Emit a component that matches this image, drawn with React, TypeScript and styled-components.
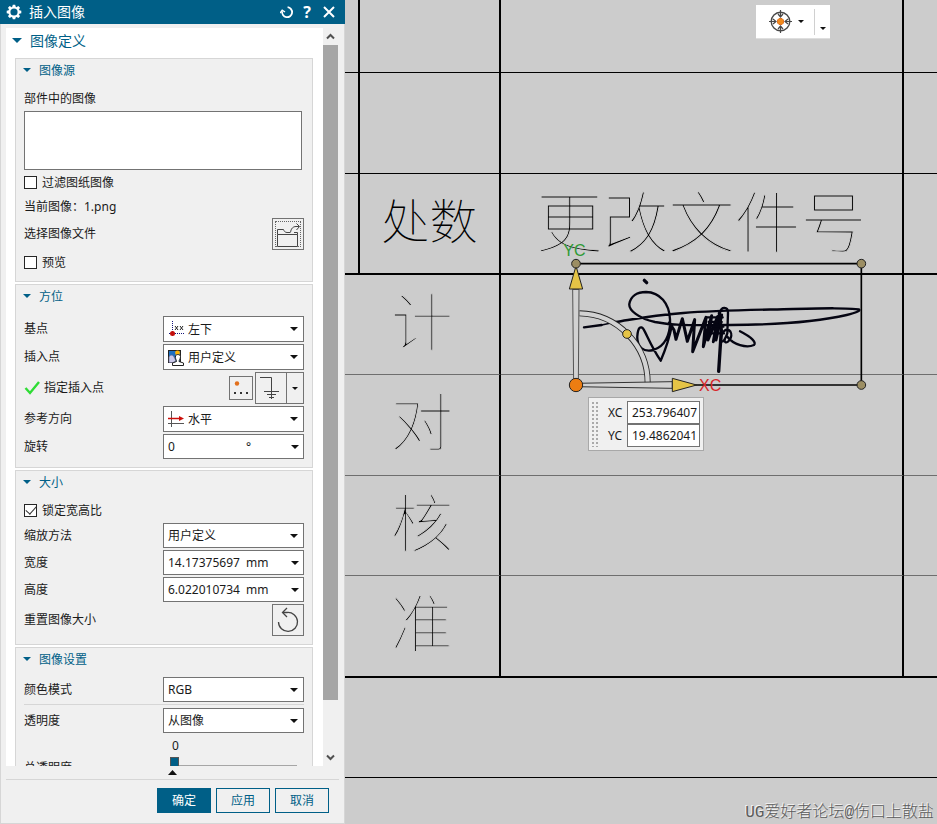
import React from 'react';
import styled, { createGlobalStyle, css } from 'styled-components';

const BLUE = '#005f87';
const LINE = '#d6d6d6';
const EDGE = '#737373';

const Global = createGlobalStyle`
  * { box-sizing: border-box; }
  body { margin: 0; background: #cccccc; }
  body, button, input, select {
    font-family: 'Noto Sans', 'Noto Sans CJK SC', sans-serif;
    font-size: 12px;
    color: #1a1a1a;
  }
  button { padding: 0; cursor: pointer; }
`;

const Screen = styled.div`
  display: flex;
  height: 100vh;
  overflow: hidden;
`;

/* ---------- dialog ---------- */

const Dialog = styled.aside`
  display: flex;
  flex-direction: column;
  flex: 0 0 345px;
  background: #f0f0f0;
`;

const TitleBar = styled.header`
  display: flex;
  align-items: center;
  height: 24px;
  padding: 0 6px;
  background: ${BLUE};
  color: #fff;
`;

const Title = styled.h1`
  flex: 1;
  margin: 0 0 0 7px;
  font-size: 14px;
  line-height: 20px;
  font-weight: 400;
`;

const TitleButton = styled.button`
  display: grid;
  place-items: center;
  width: 20px;
  height: 20px;
  border: 0;
  background: none;
  color: #fff;
  font-size: 16px;
  line-height: 20px;
  font-weight: 700;
  &:last-child {
    margin-left: 2px;
  }
`;

const DialogBody = styled.div`
  display: flex;
  flex: 1;
  flex-direction: column;
  min-height: 0;
  padding: 4px 5px 0;
  border: 1px solid ${LINE};
  border-top: 0;
`;

const ScrollArea = styled.div`
  display: flex;
  flex: 1;
  min-height: 0;
  padding-right: 1px;
`;

const Content = styled.div`
  display: flex;
  flex: 1;
  flex-direction: column;
  gap: 2px;
  overflow: hidden;
  background: #fff;
`;

const ScrollBar = styled.div`
  display: flex;
  flex-direction: column;
  width: 15px;
`;

const ScrollButton = styled.button`
  display: grid;
  place-items: center;
  height: 17px;
  border: 0;
  background: none;
`;

const ScrollTrack = styled.div`
  flex: 1;
`;

const ScrollThumb = styled.div`
  height: 93%;
  background: #a6a6a6;
`;

const MainHeading = styled.h2`
  display: flex;
  flex: 0 0 28px;
  align-items: center;
  gap: 8px;
  margin: 0;
  padding: 0 0 4px 6px;
  color: ${BLUE};
  font-size: 14px;
  font-weight: 400;
`;

const Section = styled.section`
  flex: none;
  margin: 0 10px 0 9px;
  border: 1px solid ${LINE};
  background: #f0f0f0;
`;

const SectionHeading = styled.h3`
  display: flex;
  align-items: center;
  gap: 8px;
  height: 22px;
  margin: 0;
  padding-left: 7px;
  color: ${BLUE};
  font-size: 12px;
  font-weight: 400;
`;

const Rows = styled.div<{ $top: number; $bottom: number; $gap?: number }>`
  display: flex;
  flex-direction: column;
  gap: ${(p) => p.$gap ?? 0}px;
  padding: ${(p) => p.$top}px 8px ${(p) => p.$bottom}px;
`;

const Row = styled.div<{ $h?: number }>`
  display: flex;
  align-items: center;
  justify-content: space-between;
  height: ${(p) => p.$h ?? 25}px;
  line-height: 18px;
`;

const SizeRows = styled.div`
  display: flex;
  flex-direction: column;
  gap: 2px;
`;

const CheckLabel = styled.label`
  display: flex;
  align-items: center;
  gap: 5px;
`;

const CheckBox = styled.input`
  display: grid;
  place-items: center;
  appearance: none;
  width: 13px;
  height: 13px;
  margin: 0;
  border: 1px solid #262626;
  background: #fff;
  &:checked::after {
    content: '';
    width: 9px;
    height: 5px;
    margin-top: -3px;
    border: solid #333;
    border-width: 0 0 1px 1px;
    transform: rotate(-48deg);
  }
`;

const ListBox = styled.select`
  appearance: none;
  display: block;
  height: 59px;
  margin: 0 2px 0 0;
  border: 1px solid ${EDGE};
  border-radius: 0;
  background: #fff;
`;

const field = css`
  display: flex;
  align-items: center;
  width: 141px;
  height: 100%;
  border: 1px solid ${EDGE};
  background: #fff;
`;

const Drop = styled.div`
  ${field}
  padding: 0 5px 0 4px;
  gap: 4px;
`;

const DropSelect = styled.select`
  appearance: none;
  flex: 1;
  min-width: 0;
  height: 100%;
  padding: 0;
  border: 0;
  background: none;
  outline: 0;
`;

const NumberBox = styled.div`
  ${field}
  padding: 0 4px;
`;

const NumberInput = styled.input`
  width: 78px;
  height: 20px;
  padding: 0;
  border: 0;
  outline: 0;
  background: none;
`;

const Unit = styled.span`
  flex: 1;
`;

const BareButton = styled.button`
  display: grid;
  place-items: center;
  border: 0;
  background: none;
`;

const IconButton = styled.button<{ $size: number }>`
  display: grid;
  place-items: center;
  width: ${(p) => p.$size}px;
  height: ${(p) => p.$size}px;
  border: 1px solid ${EDGE};
  background: #f0f0f0;
`;

const FocusRing = styled.span`
  display: grid;
  place-items: center;
  width: 26px;
  height: 26px;
  border: 1px dotted #666;
`;

const PointLabel = styled.span`
  display: flex;
  align-items: center;
  gap: 4px;
`;

const PointTools = styled.div`
  display: flex;
  align-items: center;
  gap: 2px;
`;

const SplitButton = styled.div`
  display: flex;
  height: 32px;
  border: 1px solid ${EDGE};
`;

const SplitMain = styled(BareButton)`
  width: 30px;
`;

const SplitArrow = styled(BareButton)`
  width: 17px;
  border-left: 1px solid ${EDGE};
`;

const Rule = styled.hr`
  height: 1px;
  margin: 0 0 1px;
  border: 0;
  background: ${LINE};
`;

const SliderRow = styled.div`
  display: flex;
  align-items: flex-end;
  justify-content: space-between;
  height: 42px;
  line-height: 18px;
`;

const SliderBox = styled.div`
  display: flex;
  flex-direction: column;
  align-self: flex-start;
  width: 141px;
  padding: 0 7px;
`;

const SliderValue = styled.output`
  padding-left: 2px;
  line-height: 21px;
`;

const Slider = styled.input`
  appearance: none;
  width: 100%;
  height: 18px;
  margin: 0;
  background: linear-gradient(#a6a6a6, #a6a6a6) center / 100% 1px no-repeat;
  &::-webkit-slider-thumb {
    appearance: none;
    width: 9px;
    height: 16px;
    border: 1px solid #555;
    background: ${BLUE};
  }
`;

const MoreBar = styled.div`
  display: flex;
  height: 14px;
  padding: 4px 162px 0;
  border-bottom: 1px solid ${LINE};
`;

const Footer = styled.footer`
  display: flex;
  justify-content: flex-end;
  gap: 5px;
  padding: 8px 10px 10px;
`;

const ActionButton = styled.button<{ $primary?: boolean }>`
  width: 54px;
  height: 25px;
  padding-bottom: 2px;
  border: 1px solid ${BLUE};
  background: ${(p) => (p.$primary ? BLUE : '#f0f0f0')};
  color: ${(p) => (p.$primary ? '#fff' : BLUE)};
`;

/* ---------- drawing view ---------- */

const View = styled.main`
  position: relative;
  flex: 1;
  min-width: 0;
  overflow: hidden;
  background: #cccccc;
`;

const Sheet = styled.div`
  display: grid;
  grid-template-columns: 15px 141px 403px 1fr;
`;

type Weight = 'fine' | 'thin' | 'bold';

const Cell = styled.div<{ $h: number; $span?: number; $line: Weight; $open?: boolean }>`
  display: flex;
  align-items: center;
  justify-content: center;
  height: ${(p) => p.$h}px;
  padding-bottom: 12px;
  grid-column: span ${(p) => p.$span ?? 1};
  border-bottom: ${(p) => (p.$line === 'bold' ? 2 : 1)}px solid
    ${(p) => (p.$line === 'fine' ? '#6e6e6e' : '#000')};
  border-right: ${(p) => (p.$open ? 0 : 2)}px solid #000;
`;

const CadText = styled.span<{ $size: number }>`
  font-family: 'Noto Sans CJK SC', sans-serif;
  font-size: ${(p) => p.$size}px;
  font-weight: 100;
  line-height: 70px;
  color: #000;
  white-space: nowrap;
  ${(p) => p.$size > 60 && '-webkit-text-stroke: 1px #cccccc;'}
`;

const Manipulator = styled.svg`
  position: absolute;
  left: 195px;
  top: 230px;
`;

const SnapBar = styled.div`
  position: absolute;
  left: 411px;
  top: 5px;
  display: flex;
  height: 33px;
  background: #fff;
  box-shadow: 0 1px 0 #dedede;
`;

const SnapButton = styled(BareButton)`
  display: flex;
  align-items: center;
  gap: 6px;
  width: 58px;
  padding-left: 13px;
`;

const SnapMore = styled(BareButton)`
  width: 16px;
  height: 26px;
  margin-top: 4px;
  padding-top: 12px;
  border-left: 1px solid #d0d0d0;
`;

const CoordPanel = styled.div`
  position: absolute;
  left: 243px;
  top: 397px;
  display: flex;
  gap: 10px;
  padding: 3px;
  border: 1px solid #a8a8a8;
  background: #f0f0f0;
`;

const Grip = styled.div`
  width: 7px;
  margin-left: -1px;
  background: radial-gradient(circle, #aaa 1px, transparent 1px) 0 0 / 4px 4px;
`;

const CoordFields = styled.div`
  display: flex;
  flex-direction: column;
`;

const CoordLabel = styled.label`
  display: flex;
  align-items: center;
  gap: 3px;
  height: 23px;
`;

const CoordName = styled.span`
  width: 16px;
`;

const CoordInput = styled.input`
  width: 73px;
  height: 23px;
  padding: 0 2px 0 4px;
  border: 1px solid ${EDGE};
  background: #fff;
`;

const Watermark = styled.div`
  position: absolute;
  right: 3px;
  bottom: 0;
  font-family: 'Liberation Mono', 'Noto Sans CJK SC', monospace;
  font-size: 16px;
  font-weight: 300;
  line-height: 22px;
  color: #5c5c5c;
  text-shadow: -1px -1px 0 #f4f4f4;
`;

/* ---------- icons ---------- */

const Caret = ({ w = 8, color = '#111' }: { w?: number; color?: string }) => (
  <svg width={w} height={w / 2} viewBox="0 0 8 4" aria-hidden="true">
    <path d="M0 0H8L4 4Z" fill={color} />
  </svg>
);

const Gear = () => (
  <svg width="16" height="16" viewBox="-8 -8 16 16" aria-hidden="true">
    <g fill="#fff">
      {[0, 45, 90, 135, 180, 225, 270, 315].map((a) => (
        <path key={a} d="M-1.800 -5L-1.200 -7.300H1.200L1.800 -5Z" transform={`rotate(${a})`} />
      ))}
    </g>
    <circle r="4.600" fill="none" stroke="#fff" strokeWidth="2" />
  </svg>
);

const ResetSmall = () => (
  <svg width="14" height="14" viewBox="0 0 14 14" fill="none" stroke="#fff" aria-hidden="true">
    <path d="M2.200 6.200A5 5 0 1 0 7.600 2.200" strokeWidth="1.800" />
    <path d="M0.200 8L2.200 5.200L5 7" strokeWidth="1.400" />
  </svg>
);

const Cross = () => (
  <svg width="12" height="12" viewBox="0 0 12 12" stroke="#fff" strokeWidth="2" aria-hidden="true">
    <path d="M1 1L11 11M11 1L1 11" />
  </svg>
);

const Chevron = ({ down = false }: { down?: boolean }) => (
  <svg width="9" height="7" viewBox="0 0 9 7" fill="none" stroke="#505050" strokeWidth="2" aria-hidden="true">
    <path d={down ? 'M1 1.5L4.5 5L8 1.5' : 'M1 5.5L4.5 2L8 5.5'} />
  </svg>
);

const FolderOpen = () => (
  <svg width="24" height="26" viewBox="0 0 24 26" fill="none" stroke="#444" aria-hidden="true">
    <path d="M1.500 12.500H21.500V24.500H1.500ZM1.500 12.500V7.500H7.500C8 9 9 10.500 11 10.500H14M18 10.500H21.500V12.500" />
    <path d="M14.500 10.500C15 6.500 17 4.500 20 4.500H23M20.500 1.500L23.500 4.500L20.500 8" />
  </svg>
);

const BasePoint = () => (
  <svg width="16" height="16" viewBox="0 0 16 16" aria-hidden="true">
    <path d="M4.500 0V16M1 12.500H16" stroke="#14147a" strokeDasharray="1 1" />
    <circle cx="4.500" cy="12.500" r="2.500" fill="#c4100c" />
    <path d="M7 5L10 9M10 5L7 9M12 5L15 9M15 5L12 9" stroke="#222" />
  </svg>
);

const UserPoint = () => (
  <svg width="16" height="17" viewBox="0 0 16 17" aria-hidden="true">
    <rect x="0.500" y="1.500" width="12" height="12" fill="#1e6fc0" stroke="#222" />
    <circle cx="9.500" cy="4" r="2.400" fill="#ffb400" />
    <path d="M1 8C2 5.500 5 5.500 6 8L8 12L5 13.500H1Z" fill="#cbc9ea" stroke="#68688c" strokeWidth=".6" />
    <path d="M7.500 7C8 5 12 5 12.500 7.500C12.500 10 11 11 11 12.500L15.500 14V16.500H4.500V14L8.500 12.500C8 10 7 9 7.500 7Z" fill="#fff" stroke="#222" />
  </svg>
);

const Horizontal = () => (
  <svg width="16" height="16" viewBox="0 0 16 16" aria-hidden="true">
    <path d="M3.500 0V16M0 12.500H16" stroke="#555" fill="none" />
    <path d="M0 7.500H13" stroke="#cc100c" strokeWidth="1.500" />
    <path d="M11 5L16 7.500L11 10Z" fill="#cc100c" />
  </svg>
);

const Tick = () => (
  <svg width="16" height="14" viewBox="0 0 16 14" fill="none" stroke="#2fdc35" strokeWidth="2.400" aria-hidden="true">
    <path d="M1.500 7L6 12L15 1" />
  </svg>
);

const PointDots = () => (
  <svg width="16" height="16" viewBox="0 0 16 16" aria-hidden="true">
    <circle cx="4" cy="3.500" r="2.200" fill="#e2701c" />
    <path d="M1 12h2v2h-2zM7 12h2v2h-2zM13 12h2v2h-2z" fill="#333" />
  </svg>
);

const Inferred = () => (
  <svg width="24" height="24" viewBox="0 0 24 24" fill="none" stroke="#444" aria-hidden="true">
    <path d="M1 1.500H12.500V23M5 15.500H20M8 18.500H17M10 21.500H15" />
  </svg>
);

const ResetLarge = () => (
  <svg width="22" height="26" viewBox="0 0 22 26" fill="none" stroke="#444" strokeWidth="1.300" aria-hidden="true">
    <path d="M1.500 15A9.500 9.500 0 1 0 10 5.500H6" />
    <path d="M10 1L5.500 5.500L10 10" />
  </svg>
);

const Target = () => (
  <svg width="23" height="23" viewBox="-11.5 -11.5 23 23" fill="none" stroke="#484848" aria-hidden="true">
    <circle r="9.300" strokeWidth="1.400" />
    {[0, 90, 180, 270].map((a) => (
      <path key={a} d="M0 -11.500V-5M-2.500 -7.500L0 -4.500L2.500 -7.500" strokeWidth="1.200" transform={`rotate(${a})`} />
    ))}
    <path d="M-1.500 -3H1.500L3 -1.500V1.500L1.500 3H-1.500L-3 1.500V-1.500Z" fill="#f08a1c" stroke="#d9600c" strokeWidth=".8" />
  </svg>
);

const Signature = () => (
  <g fill="none" stroke="#050512" strokeLinecap="round" strokeLinejoin="round" strokeWidth="7">
    <path d="M313 151L320 158" strokeWidth="10" />
    <path d="M132 292L185 285M227 276C290 266 330 257 430 249S640 240 760 237S900 234 957 238C962 242 950 248 920 255C830 276 720 284 570 285S400 286 345 276C295 265 266 240 268 222C272 198 292 186 318 186C360 187 388 220 390 268C392 315 374 350 340 360C310 368 290 350 292 318C294 292 302 286 311 298C322 318 335 352 362 392C376 360 388 325 396 285" />
    <path d="M185 285L227 276" strokeWidth="5" />
    <path d="M388 278L402 300L408 328L427 266L442 334L464 269L458 365L498 262L490 350L515 257L504 330L533 260L520 335L542 262L528 330L545 255" strokeWidth="9" />
    <path d="M500 262H548M506 276H545M504 290H550M512 310H552" strokeWidth="7" />
    <path d="M538 250L544 300L536 424" strokeWidth="10" />
    <path d="M540 248C544 228 564 230 564 248L562 310C548 345 538 340 546 312C560 285 580 305 572 324C560 348 545 335 560 318C580 345 620 355 642 345C650 337 635 322 600 304" />
  </g>
);

const Gizmo = () => (
  <Manipulator width="350" height="230" viewBox="0 0 1050 690" role="img" aria-label="XC YC">
    <g fill="none" stroke="#000" strokeWidth="5">
      <path d="M108 101H964V465H108" />
    </g>
    <Signature />
    <g fill="none">
      <path d="M118 250A209 209 0 0 1 323 460" stroke="#222" strokeWidth="18" />
      <path d="M118 250A209 209 0 0 1 323 460" stroke="#d2d2d2" strokeWidth="13" />
    </g>
    <path d="M98 178L101 465H115L117 178Z" fill="#d2d2d2" stroke="#555" strokeWidth="3" />
    <path d="M108 460L397 455V475L108 470Z" fill="#d2d2d2" stroke="#333" strokeWidth="3" />
    <g stroke="#222" strokeWidth="3">
      <path d="M108 108L128 177H88Z" fill="#e5c446" />
      <path d="M470 465L397 445V485Z" fill="#e5c446" />
      <circle cx="108" cy="101" r="13" fill="#9c8e63" />
      <circle cx="964" cy="101" r="13" fill="#9c8e63" />
      <circle cx="964" cy="465" r="13" fill="#9c8e63" />
      <circle cx="261" cy="312" r="13" fill="#e5c446" />
      <circle cx="108" cy="465" r="20" fill="#ed7d12" />
    </g>
    <g fontFamily="'Liberation Sans', sans-serif" fontSize="48">
      <text x="70" y="78" fill="#2f9a35">YC</text>
      <text x="477" y="484" fill="#d8262a">XC</text>
    </g>
  </Manipulator>
);

/* ---------- form parts ---------- */

interface DropRowProps {
  id: string;
  label: string;
  value: string;
  icon?: React.ReactNode;
  h?: number;
}

const DropRow = ({ id, label, value, icon, h }: DropRowProps) => (
  <Row $h={h}>
    <label htmlFor={id}>{label}</label>
    <Drop>
      {icon}
      <DropSelect id={id} defaultValue={value}>
        <option>{value}</option>
      </DropSelect>
      <Caret />
    </Drop>
  </Row>
);

const NumberRow = ({ id, label, value, unit }: { id: string; label: string; value: string; unit: string }) => (
  <Row>
    <label htmlFor={id}>{label}</label>
    <NumberBox>
      <NumberInput id={id} defaultValue={value} />
      <Unit>{unit}</Unit>
      <BareButton type="button" aria-label={label}>
        <Caret />
      </BareButton>
    </NumberBox>
  </Row>
);

const Heading = ({ children }: { children: string }) => (
  <SectionHeading>
    <Caret color={BLUE} />
    {children}
  </SectionHeading>
);

const upperRows: { h: number; line: Weight; a?: string; b?: string }[] = [
  { h: 73, line: 'thin' },
  { h: 101, line: 'thin' },
  { h: 101, line: 'bold', a: '处数', b: '更改文件号' },
];

const lowerRows: { h: number; line: Weight; a: string }[] = [
  { h: 100, line: 'fine', a: '计' },
  { h: 101, line: 'fine', a: '对' },
  { h: 100, line: 'fine', a: '核' },
  { h: 102, line: 'bold', a: '准' },
];

export default function App() {
  return (
    <>
      <Global />
      <Screen>
        <Dialog>
          <TitleBar>
            <Gear />
            <Title>插入图像</Title>
            <TitleButton type="button" aria-label="重置"><ResetSmall /></TitleButton>
            <TitleButton type="button">?</TitleButton>
            <TitleButton type="button" aria-label="关闭"><Cross /></TitleButton>
          </TitleBar>
          <DialogBody>
            <ScrollArea>
              <Content>
                <MainHeading>
                  <Caret w={10} color={BLUE} />
                  图像定义
                </MainHeading>
                <Section>
                  <Heading>图像源</Heading>
                  <Rows $top={6} $bottom={6}>
                    <Row $h={24}><label htmlFor="images">部件中的图像</label></Row>
                    <ListBox id="images" size={3} />
                    <Row>
                      <CheckLabel><CheckBox type="checkbox" />过滤图纸图像</CheckLabel>
                    </Row>
                    <Row $h={23}>当前图像：1.png</Row>
                    <Row $h={32}>
                      选择图像文件
                      <IconButton $size={32} type="button" aria-label="选择图像文件">
                        <FocusRing><FolderOpen /></FocusRing>
                      </IconButton>
                    </Row>
                    <Row>
                      <CheckLabel><CheckBox type="checkbox" />预览</CheckLabel>
                    </Row>
                  </Rows>
                </Section>
                <Section>
                  <Heading>方位</Heading>
                  <Rows $top={9} $bottom={8} $gap={2}>
                    <DropRow id="base" label="基点" value="左下" icon={<BasePoint />} h={26} />
                    <DropRow id="insert" label="插入点" value="用户定义" icon={<UserPoint />} h={26} />
                    <Row $h={32}>
                      <PointLabel><Tick />指定插入点</PointLabel>
                      <PointTools>
                        <IconButton $size={24} type="button" aria-label="点对话框"><PointDots /></IconButton>
                        <SplitButton>
                          <SplitMain type="button" aria-label="自动判断的点"><Inferred /></SplitMain>
                          <SplitArrow type="button" aria-label="更多"><Caret w={6} /></SplitArrow>
                        </SplitButton>
                      </PointTools>
                    </Row>
                    <DropRow id="direction" label="参考方向" value="水平" icon={<Horizontal />} h={26} />
                    <NumberRow id="rotate" label="旋转" value="0" unit="°" />
                  </Rows>
                </Section>
                <Section>
                  <Heading>大小</Heading>
                  <Rows $top={5} $bottom={8}>
                    <Row>
                      <CheckLabel><CheckBox type="checkbox" defaultChecked />锁定宽高比</CheckLabel>
                    </Row>
                    <SizeRows>
                      <DropRow id="scale" label="缩放方法" value="用户定义" />
                      <NumberRow id="width" label="宽度" value="14.17375697" unit="mm" />
                      <NumberRow id="height" label="高度" value="6.022010734" unit="mm" />
                      <Row $h={32}>
                        重置图像大小
                        <IconButton $size={32} type="button" aria-label="重置图像大小"><ResetLarge /></IconButton>
                      </Row>
                    </SizeRows>
                  </Rows>
                </Section>
                <Section>
                  <Heading>图像设置</Heading>
                  <Rows $top={7} $bottom={8} $gap={2}>
                    <DropRow id="color" label="颜色模式" value="RGB" />
                    <Rule />
                    <DropRow id="alpha" label="透明度" value="从图像" />
                    <SliderRow>
                      <label htmlFor="total">总透明度</label>
                      <SliderBox>
                        <SliderValue htmlFor="total">0</SliderValue>
                        <Slider id="total" type="range" min={0} max={100} defaultValue={0} />
                      </SliderBox>
                    </SliderRow>
                  </Rows>
                </Section>
              </Content>
              <ScrollBar>
                <ScrollButton type="button" aria-label="向上滚动"><Chevron /></ScrollButton>
                <ScrollTrack><ScrollThumb /></ScrollTrack>
                <ScrollButton type="button" aria-label="向下滚动"><Chevron down /></ScrollButton>
              </ScrollBar>
            </ScrollArea>
            <MoreBar>
              <svg width="9" height="5" viewBox="0 0 9 5" aria-hidden="true">
                <path d="M0 5H9L4.500 0Z" fill="#111" />
              </svg>
            </MoreBar>
            <Footer>
              <ActionButton type="button" $primary>确定</ActionButton>
              <ActionButton type="button">应用</ActionButton>
              <ActionButton type="button">取消</ActionButton>
            </Footer>
          </DialogBody>
        </Dialog>

        <View>
          <Sheet>
            {upperRows.map((r, i) => (
              <React.Fragment key={i}>
                <Cell $h={r.h} $line={r.line} />
                <Cell $h={r.h} $line={r.line}>{r.a && <CadText $size={48}>{r.a}</CadText>}</Cell>
                <Cell $h={r.h} $line={r.line}>{r.b && <CadText $size={66}>{r.b}</CadText>}</Cell>
                <Cell $h={r.h} $line={r.line} $open />
              </React.Fragment>
            ))}
            {lowerRows.map((r) => (
              <React.Fragment key={r.a}>
                <Cell $h={r.h} $span={2} $line={r.line}><CadText $size={62}>{r.a}</CadText></Cell>
                <Cell $h={r.h} $line={r.line} />
                <Cell $h={r.h} $line={r.line} $open />
              </React.Fragment>
            ))}
            <Cell $h={100} $span={4} $line="thin" $open />
          </Sheet>

          <Gizmo />

          <SnapBar>
            <SnapButton type="button" aria-label="捕捉点"><Target /><Caret w={6} /></SnapButton>
            <SnapMore type="button" aria-label="更多选项"><Caret w={6} /></SnapMore>
          </SnapBar>

          <CoordPanel>
            <Grip />
            <CoordFields>
              <CoordLabel><CoordName>XC</CoordName><CoordInput defaultValue="253.796407" /></CoordLabel>
              <CoordLabel><CoordName>YC</CoordName><CoordInput defaultValue="19.4862041" /></CoordLabel>
            </CoordFields>
          </CoordPanel>

          <Watermark>UG爱好者论坛@伤口上散盐</Watermark>
        </View>
      </Screen>
    </>
  );
}
